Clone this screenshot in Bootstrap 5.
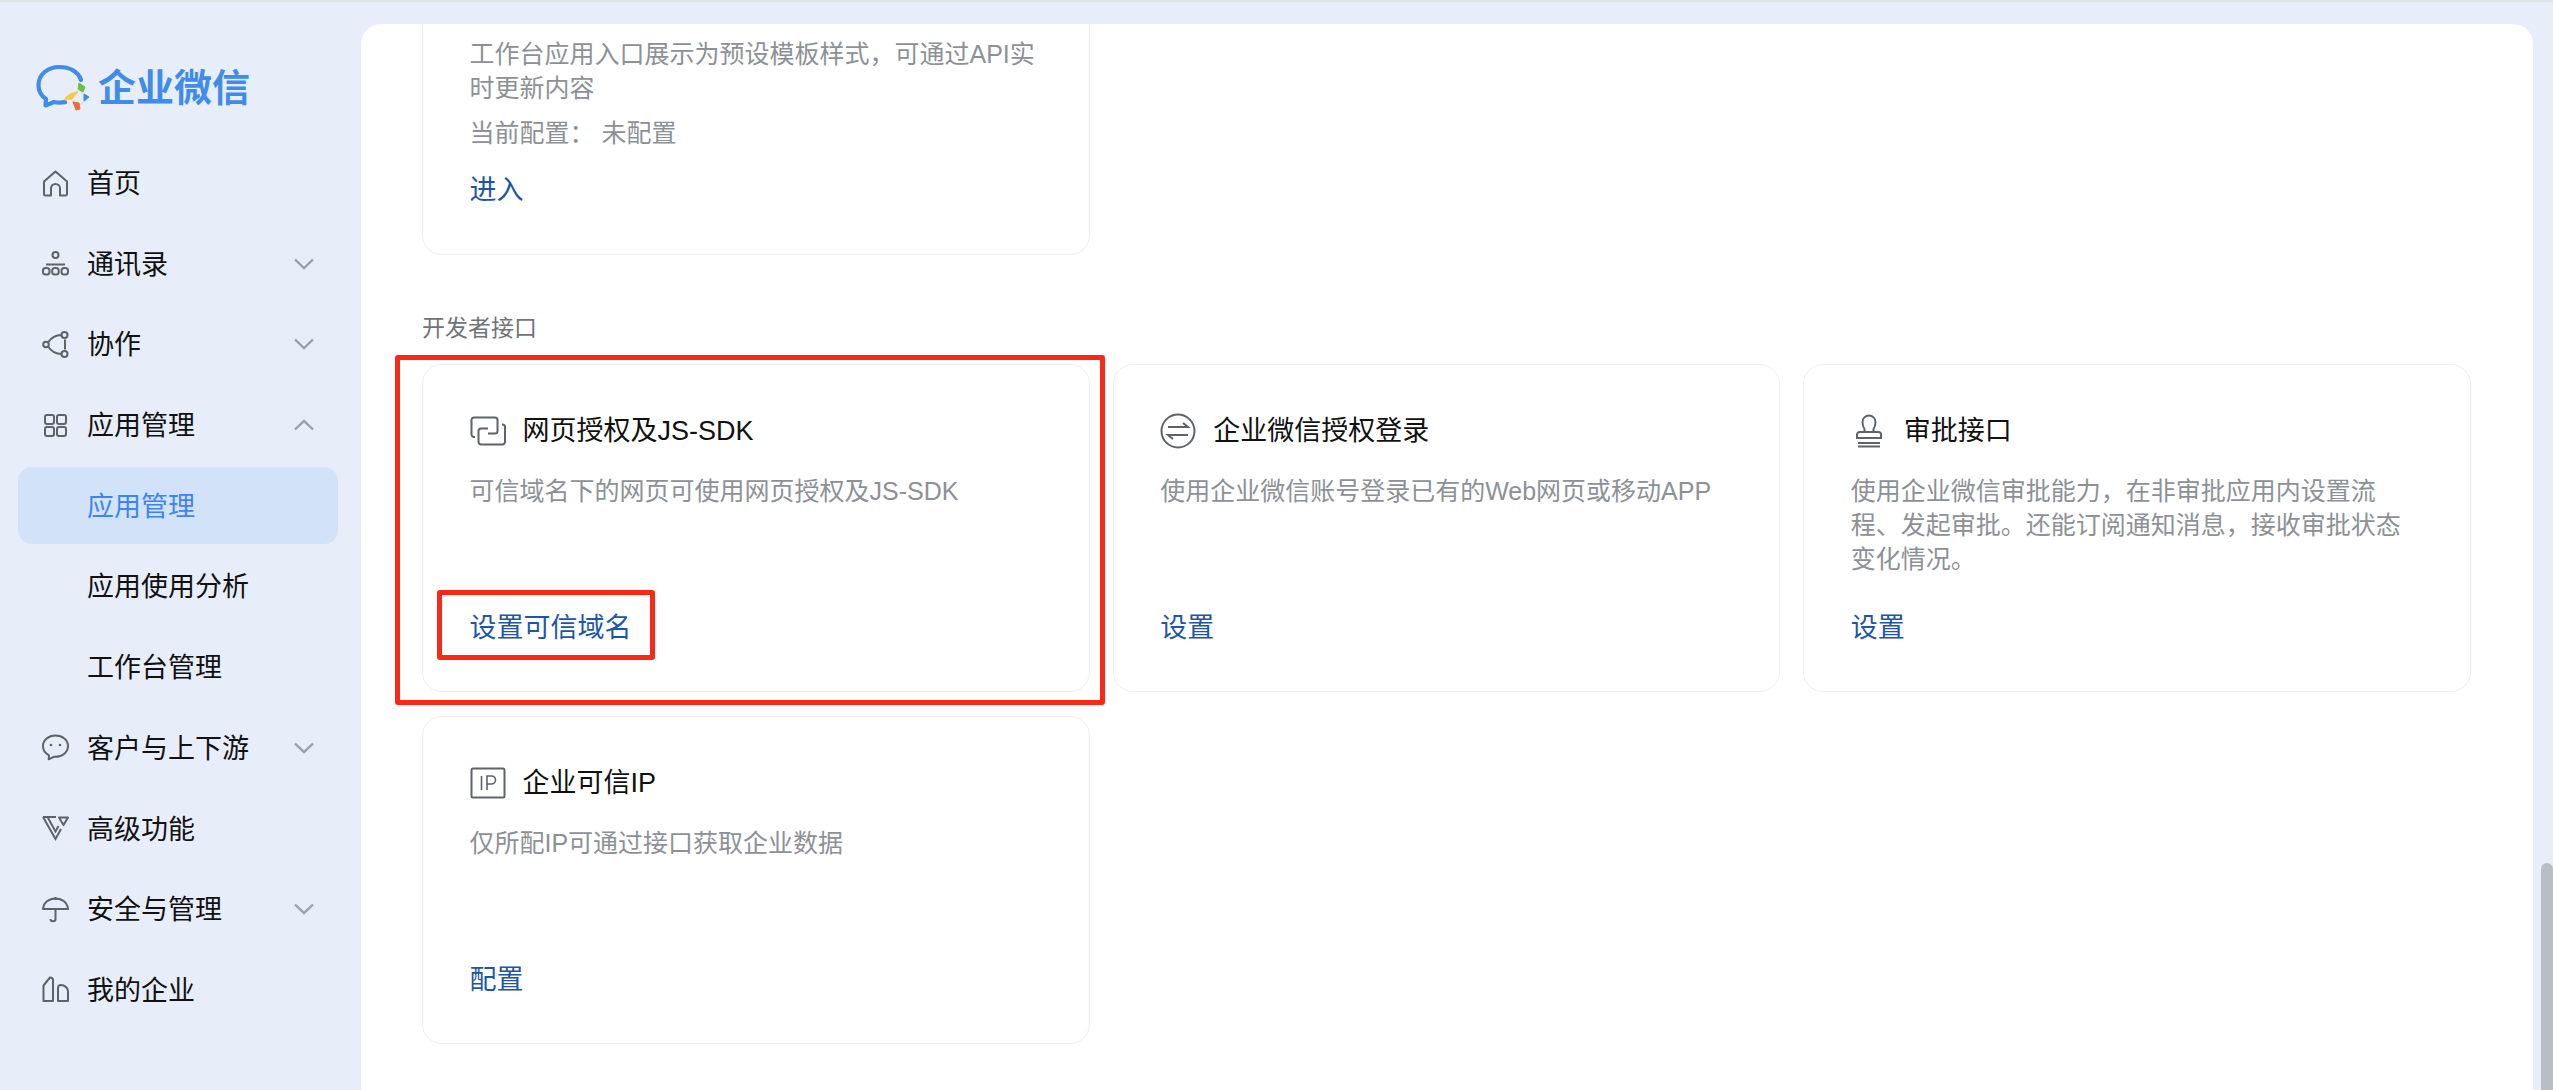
<!DOCTYPE html>
<html lang="zh-CN">
<head>
    <meta charset="UTF-8">
    <meta name="viewport" content="width=device-width, initial-scale=1.0">
    <title>企业微信 应用管理</title>
    <link href="https://cdn.jsdelivr.net/npm/bootstrap@5.3.0/dist/css/bootstrap.min.css" rel="stylesheet">
    <style>
        html, body { height: 100%; overflow: hidden; }
        body {
            background: #e7eefa;
            border-top: 2px solid #e0e3e6;
            font-family: "Liberation Sans", "Noto Sans CJK SC", sans-serif;
            color: #111;
        }
        .app-shell { height: 1088px; }
        .side-panel { width: 361px; padding: 62px 23px 0 18px; }
        .logo-row { height: 48px; padding-left: 17px; margin-bottom: 32.5px; gap: 1px; }
        .logo-text { font-size: 38px; font-weight: 700; line-height: 48px; color: #3f8cea; }
        .side-nav { gap: 3.7px; }
        .side-link {
            height: 77px;
            padding: 0 24px 0 24px;
            font-size: 27px;
            line-height: 34px;
            color: #111;
            border-radius: 14px;
            gap: 18px;
        }
        .side-link span { padding-top: 2px; }
        .side-link.is-sub { padding-left: 69px; }
        .side-link.is-active { background: #d2e3f9; color: #3d84f7; }
        .side-icon { width: 27px; height: 27px; flex: none; fill: none; stroke: #5f6368; stroke-width: 2; }
        .side-chevron { width: 20px; height: 12px; fill: none; stroke: #9aa0a8; stroke-width: 2.4; margin-left: auto; }
        .main-panel {
            width: 2172px;
            margin-top: 22px;
            padding: 0 62px 0 61px;
            background: #fff;
            border-radius: 20px 20px 0 0;
        }
        .api-grid { display: grid; grid-template-columns: repeat(3, 1fr); column-gap: 23px; row-gap: 24px; }
        .api-card {
            position: relative;
            height: 328px;
            padding: 48px 47px 46px 46.5px;
            border: 1px solid #eeeff1;
            border-radius: 20px;
            background: #fff;
        }
        .api-card.is-cut {
            height: 231px;
            width: calc((100% - 46px) / 3);
            padding-top: 13px;
            border-top: 0;
            border-radius: 0 0 20px 20px;
        }
        .api-head { height: 36px; gap: 17px; margin-bottom: 25px; }
        .api-icon-box { width: 36px; flex: none; }
        .api-icon { display: block; margin: 0 auto; fill: none; stroke: #5f6368; stroke-width: 2; }
        .api-title { font-size: 27px; line-height: 36px; color: #111; }
        .api-desc { font-size: 25px; line-height: 34px; color: #8d9196; margin: 0; }
        .api-state { font-size: 25px; line-height: 34px; color: #8d9196; margin: 11px 0 0; }
        .api-enter { margin-top: 23px; }
        .api-link { font-size: 27px; line-height: 34px; color: #1d56a5; text-decoration: none; }
        .section-label { font-size: 23px; line-height: 34px; color: #707478; margin: 56px 0 19px; }
        .red-frame { position: absolute; border: 5px solid #fb2717; border-radius: 3px; pointer-events: none; }
        .red-outer { left: -28px; top: -10px; width: 710px; height: 350px; }
        .red-inner { left: 14px; top: 225px; width: 218px; height: 70px; }
        .scroll-gutter { width: 20px; }
        .scroll-thumb { width: 12px; height: 227px; background: #b9bdc6; border-radius: 6px 6px 0 0; }
    </style>
</head>
<body>
<div class="app-shell d-flex">
    <aside class="side-panel flex-shrink-0">
        <div class="logo-row d-flex align-items-center">
            <svg width="62" height="50" viewBox="0 0 62 50" fill="none">
                <path d="M46 17C43 8 34 4 24.500 4 12 4 3.500 12 3.500 22c0 6 3 11 7.500 14l-.5 6.500 8.500-3.500c3.500.8 7 .8 11 .2" stroke="#3f8cea" stroke-width="4.200" stroke-linecap="round" stroke-linejoin="round"/>
                <path d="M44 27 34 34 43 44 53 35Z" stroke="#cfdff5" stroke-width="1.500"/>
                <path d="M44 20l6 4-2 5-5-3Z" fill="#6cbf3c" stroke="#6cbf3c" stroke-linejoin="round"/>
                <path d="M43 29l-6 7-8 1c2-4 8-8 14-8Z" fill="#f7c948" stroke="#f7c948" stroke-linejoin="round"/>
                <path d="M49 31l5 3-5 4Z" fill="#3f8cea" stroke="#3f8cea" stroke-linejoin="round"/>
                <path d="M38 39l6 1 1 6-4 1Z" fill="#ee6a36" stroke="#ee6a36" stroke-linejoin="round"/>
            </svg>
            <span class="logo-text">企业微信</span>
        </div>
        <nav class="side-nav nav flex-column flex-nowrap">
            <a class="side-link d-flex align-items-center text-decoration-none" href="#">
                <svg class="side-icon" viewBox="0 0 27 27"><path d="M2 11.500 13.500 1.500 25 11.500V24a1.500 1.500 0 0 1-1.500 1.500H18v-7a4.500 4.500 0 0 0-9 0v7H3.500A1.500 1.500 0 0 1 2 24Z" stroke-linejoin="round"/></svg>
                <span>首页</span>
            </a>
            <a class="side-link d-flex align-items-center text-decoration-none" href="#">
                <svg class="side-icon" viewBox="0 0 27 27"><circle cx="13.500" cy="5" r="3"/><rect x="1" y="18" width="6.500" height="6.500" rx="2.500"/><rect x="10.200" y="18" width="6.500" height="6.500" rx="2.500"/><rect x="19.500" y="18" width="6.500" height="6.500" rx="2.500"/><path d="M4 14.500h19"/></svg>
                <span>通讯录</span>
                <svg class="side-chevron" viewBox="0 0 20 12"><path d="M1 1.500 10 10l9-8.500"/></svg>
            </a>
            <a class="side-link d-flex align-items-center text-decoration-none" href="#">
                <svg class="side-icon" viewBox="0 0 27 27"><circle cx="22.500" cy="4" r="3"/><circle cx="22.500" cy="23" r="3"/><circle cx="4" cy="13.500" r="2.800"/><path d="M19.500 4C14 4 9 7 6 11.500M6 15.500C9 20 14 23 19.500 23M23 8.500v10"/></svg>
                <span>协作</span>
                <svg class="side-chevron" viewBox="0 0 20 12"><path d="M1 1.500 10 10l9-8.500"/></svg>
            </a>
            <a class="side-link d-flex align-items-center text-decoration-none" href="#">
                <svg class="side-icon" viewBox="0 0 27 27" stroke-width="2.500"><rect x="3" y="3" width="9" height="9" rx="2"/><rect x="15" y="3" width="9" height="9" rx="2"/><rect x="3" y="15" width="9" height="9" rx="2"/><rect x="15" y="15" width="9" height="9" rx="2"/></svg>
                <span>应用管理</span>
                <svg class="side-chevron" viewBox="0 0 20 12"><path d="M1 10.500 10 2l9 8.500"/></svg>
            </a>
            <a class="side-link is-sub is-active d-flex align-items-center text-decoration-none" href="#"><span>应用管理</span></a>
            <a class="side-link is-sub d-flex align-items-center text-decoration-none" href="#"><span>应用使用分析</span></a>
            <a class="side-link is-sub d-flex align-items-center text-decoration-none" href="#"><span>工作台管理</span></a>
            <a class="side-link d-flex align-items-center text-decoration-none" href="#">
                <svg class="side-icon" viewBox="0 0 27 27"><path d="M13.500 1.500C6.500 1.500 1 6 1 12c0 4 2.500 7.500 6 9.300l-.3 4 5-2.500h1.800C20.500 22.800 26 18 26 12S20.500 1.500 13.500 1.500Z" stroke-linejoin="round"/><circle cx="9" cy="11" r="1.300" fill="#5f6368" stroke="none"/><circle cx="18" cy="11" r="1.300" fill="#5f6368" stroke="none"/></svg>
                <span>客户与上下游</span>
                <svg class="side-chevron" viewBox="0 0 20 12"><path d="M1 1.500 10 10l9-8.500"/></svg>
            </a>
            <a class="side-link d-flex align-items-center text-decoration-none" href="#">
                <svg class="side-icon" viewBox="0 0 27 27" stroke-width="2.200"><path d="M1 2h13M1 2l12.500 22L19 14M5.500 2l8 14.500 3-5.500"/><path d="M17 2.500h9L21.500 10Z" stroke-linejoin="round"/></svg>
                <span>高级功能</span>
            </a>
            <a class="side-link d-flex align-items-center text-decoration-none" href="#">
                <svg class="side-icon" viewBox="0 0 27 27"><path d="M1 13C1.500 6.500 7 2.500 13.500 2.500S25.500 6.500 26 13Z" stroke-linejoin="round"/><path d="M13.500 1v3M13.500 13v10c0 3-5 3-5 0"/></svg>
                <span>安全与管理</span>
                <svg class="side-chevron" viewBox="0 0 20 12"><path d="M1 1.500 10 10l9-8.500"/></svg>
            </a>
            <a class="side-link d-flex align-items-center text-decoration-none" href="#">
                <svg class="side-icon" viewBox="0 0 27 27"><path d="M1.500 25V9.500L8 1.500c2 0 3 1 3 2.500V25Z" stroke-linejoin="round"/><path d="M16 25V12c0-2 1.500-3 3-3 3.500 0 7 3 7 6v10Z" stroke-linejoin="round"/></svg>
                <span>我的企业</span>
            </a>
        </nav>
    </aside>

    <main class="main-panel flex-shrink-0 overflow-hidden">
        <div class="api-card is-cut d-flex flex-column">
            <p class="api-desc">工作台应用入口展示为预设模板样式，可通过API实时更新内容</p>
            <p class="api-state">当前配置：&nbsp;未配置</p>
            <a class="api-link api-enter" href="#">进入</a>
        </div>

        <div class="section-label">开发者接口</div>

        <div class="api-grid">
            <div class="api-card d-flex flex-column">
                <div class="api-head d-flex align-items-center">
                    <div class="api-icon-box">
                        <svg class="api-icon" width="36" height="30" viewBox="0 0 36 30"><path d="M5 21H4a2.500 2.500 0 0 1-2.500-2.500V4A2.500 2.500 0 0 1 4 1.500h21A2.500 2.500 0 0 1 27.500 4v11a2.500 2.500 0 0 1-2.500 2.500h-7"/><path d="M32 8.500h.500a2.500 2.500 0 0 1 2.500 2.500v15a2.500 2.500 0 0 1-2.500 2.500H11a2.500 2.500 0 0 1-2.500-2.500V15a2.500 2.500 0 0 1 2.500-2.500h7"/></svg>
                    </div>
                    <span class="api-title">网页授权及JS-SDK</span>
                </div>
                <p class="api-desc">可信域名下的网页可使用网页授权及JS-SDK</p>
                <a class="api-link mt-auto" href="#">设置可信域名</a>
                <div class="red-frame red-outer"></div>
                <div class="red-frame red-inner"></div>
            </div>

            <div class="api-card d-flex flex-column">
                <div class="api-head d-flex align-items-center">
                    <div class="api-icon-box">
                        <svg class="api-icon" width="36" height="36" viewBox="0 0 36 36"><circle cx="18" cy="18" r="16.500"/><path d="M8 14h20l-5-4M28 22H8l5 4"/></svg>
                    </div>
                    <span class="api-title">企业微信授权登录</span>
                </div>
                <p class="api-desc">使用企业微信账号登录已有的Web网页或移动APP</p>
                <a class="api-link mt-auto" href="#">设置</a>
            </div>

            <div class="api-card d-flex flex-column">
                <div class="api-head d-flex align-items-center">
                    <div class="api-icon-box">
                        <svg class="api-icon" width="30" height="34" viewBox="0 0 30 34"><path d="M10.500 18V15C9 13 8.500 11 8.500 8a6.500 6.500 0 0 1 13 0c0 3-.5 5-2 7v3"/><path d="M3 24v-3.500A2.500 2.500 0 0 1 5.500 18h19a2.500 2.500 0 0 1 2.500 2.500V24Z"/><path d="M4 32.500h22M4 29h22"/></svg>
                    </div>
                    <span class="api-title">审批接口</span>
                </div>
                <p class="api-desc">使用企业微信审批能力，在非审批应用内设置流程、发起审批。还能订阅通知消息，接收审批状态变化情况。</p>
                <a class="api-link mt-auto" href="#">设置</a>
            </div>

            <div class="api-card d-flex flex-column">
                <div class="api-head d-flex align-items-center">
                    <div class="api-icon-box">
                        <svg class="api-icon" width="36" height="32" viewBox="0 0 36 32"><rect x="1.500" y="1.500" width="33" height="29" rx="1.500"/><path d="M11.500 9v14M17 23V9h4.500a4 4 0 0 1 0 8H17" stroke-width="1.600"/></svg>
                    </div>
                    <span class="api-title">企业可信IP</span>
                </div>
                <p class="api-desc">仅所配IP可通过接口获取企业数据</p>
                <a class="api-link mt-auto" href="#">配置</a>
            </div>
        </div>
    </main>

    <div class="scroll-gutter d-flex flex-column justify-content-end align-items-end flex-shrink-0">
        <div class="scroll-thumb"></div>
    </div>
</div>
<script src="https://cdn.jsdelivr.net/npm/bootstrap@5.3.0/dist/js/bootstrap.bundle.min.js"></script>
</body>
</html>
